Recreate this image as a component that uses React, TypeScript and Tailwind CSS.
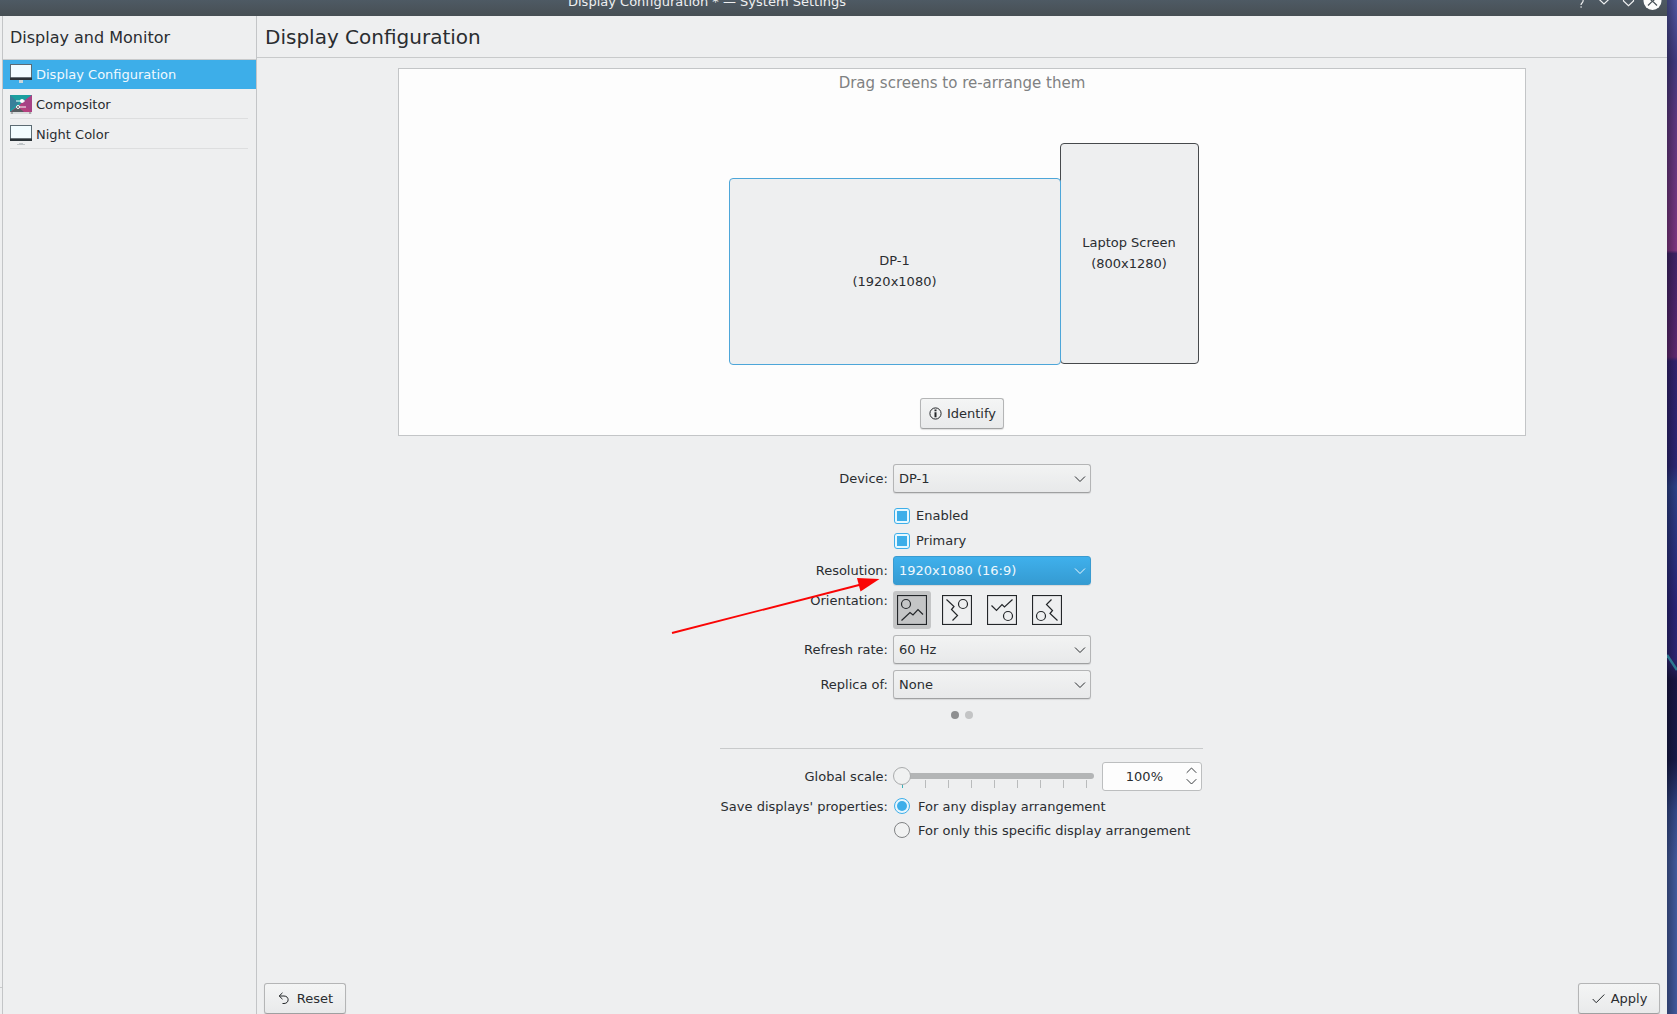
import type { ReactNode } from 'react';

const button =
  'flex items-center justify-center rounded-[3px] border border-[#b4b5b6] border-b-[#9fa0a1] bg-linear-to-b from-[#f4f5f5] to-[#e9eaeb] shadow-[0_1px_1px_rgba(0,0,0,0.12)]';

function Row({ label, className, children }: { label?: string; className: string; children: ReactNode }) {
  return (
    <div className={`flex gap-[5px] ${className}`}>
      <div className="w-[168px] shrink-0 text-right whitespace-nowrap">{label}</div>
      {children}
    </div>
  );
}

function Combo({ value, active }: { value: string; active?: boolean }) {
  return (
    <div
      className={`flex h-[29px] w-[198px] items-center justify-between rounded-[3px] border pr-[4px] pl-[5px] shadow-[0_1px_1px_rgba(0,0,0,0.1)] ${
        active
          ? 'border-[#3a9bd0] bg-linear-to-b from-[#3fb0ec] to-[#359bd2] text-[#eff8fd]'
          : 'border-[#b4b5b6] border-b-[#9fa0a1] bg-linear-to-b from-[#f2f3f3] to-[#e8e9ea]'
      }`}
    >
      <span>{value}</span>
      <svg width="12" height="8" viewBox="0 0 12 8" fill="none" stroke="currentColor" strokeWidth="1">
        <path d="M1 1.5 L6 6.5 L11 1.5" />
      </svg>
    </div>
  );
}

function Check({ label }: { label: string }) {
  return (
    <div className="flex items-center gap-[6px] pl-px">
      <span className="flex size-[16px] items-center justify-center rounded-[3px] border border-[#3daee9] bg-[#e6f8ff]">
        <span className="size-[10px] bg-[#3daee9]" />
      </span>
      {label}
    </div>
  );
}

function Radio({ label, on }: { label: string; on?: boolean }) {
  return (
    <div className="flex items-center gap-[8px] pl-px">
      <span
        className={`flex size-[16px] items-center justify-center rounded-full border ${
          on ? 'border-[#3daee9] bg-[#e8f6fd]' : 'border-[#808284] bg-[#f1f2f2]'
        }`}
      >
        {on && <span className="size-[10px] rounded-full bg-[#3daee9]" />}
      </span>
      {label}
    </div>
  );
}

const orientations = [
  { cx: 9, cy: 9, line: 'M4.5 25.5 L13 17.5 L16 20 L21 14.5 L26 19.5' },
  { cx: 21, cy: 9, line: 'M4.5 4.5 L12 11.5 L9.5 14.5 L15.5 20.5 L10.5 25.5' },
  { cx: 21, cy: 21, line: 'M4.5 10.5 L9.5 15.5 L15 9.5 L17.5 12 L25.5 4.5' },
  { cx: 9, cy: 21, line: 'M19.5 4.5 L14.5 9.5 L20.5 15.5 L18 18.5 L25.5 25.5' },
];

function Monitor({ light }: { light?: boolean }) {
  return (
    <svg width="22" height="20" viewBox="0 0 22 20">
      <rect x="0" y="0" width="22" height="16" fill="#5c6b73" />
      <rect x="1" y="1" width="20" height="12.5" fill="#f2fcff" />
      <rect x="0" y="13.5" width="22" height="2.5" fill="#2b3338" />
      {light ? (
        <path d="M9 18 H13 V19 H15 V20 H7 V19 H9 Z" fill="#bfc4c7" />
      ) : (
        <path d="M9 16 H13 V19 H9 Z" fill="#c9d6dc" />
      )}
    </svg>
  );
}

function CompositorIcon() {
  return (
    <svg width="22" height="20" viewBox="0 0 22 20">
      <rect width="22" height="17" fill="#b5417f" />
      <path d="M0 0 H22 L0 17 Z" fill="#1a9f9f" />
      <path d="M0 0 L9 8 L0 15 Z" fill="#39809a" />
      <path d="M22 0 V17 L11 8 Z" fill="#a74285" />
      <path d="M0 17 L8 12 L14 17 Z" fill="#565d60" />
      <path d="M6 6 H15 M8 12 H16" stroke="#f5ffff" strokeWidth="1.2" />
      <circle cx="12" cy="6" r="2" fill="#fff" />
      <circle cx="8" cy="12" r="1.5" fill="#565d60" stroke="#fff" />
      <rect y="17" width="22" height="2" fill="#d9dcdd" />
      <path d="M1 18 H3 M19 18 H21" stroke="#777" />
    </svg>
  );
}

export default function App() {
  return (
    <div className="relative flex h-[1014px] w-[1677px] overflow-hidden bg-[#eeeff0] font-['DejaVu_Sans',sans-serif] text-[13px] leading-[21px] text-[#2a2d30]">
      <div className="flex w-[1667px] shrink-0 flex-col">
        <header className="flex h-4 shrink-0 items-end overflow-hidden bg-linear-to-b from-[#4e5a64] to-[#474f54] text-[#eff0f1]">
          <div className="mb-[4px] ml-[568px] whitespace-nowrap">Display Configuration * — System Settings</div>
          <svg className="ml-auto shrink-0" width="92" height="16" viewBox="0 0 92 16" fill="none" stroke="#eff0f1" strokeWidth="1.2">
            <path d="M8 0 Q8.5 1.5 7 3 Q6 4 6 5 M5.3 7 H7" />
            <path d="M24 -0.8 L29 4 L34 -0.8" />
            <path d="M48.5 -1 V1 L53.5 5.6 L58.5 1 V-1" />
            <circle cx="77.5" cy="1" r="9" fill="#fcfcfc" stroke="none" />
            <path d="M73 5.5 L77.5 1 L82 5.5 M75 -1 L77.5 1.5 L80 -1" stroke="#475057" />
          </svg>
        </header>

        <div className="flex min-h-0 flex-1">
          <div className="flex w-[3px] shrink-0 flex-col border-r border-[#c3c5c7]">
            <div className="mt-[971px] h-px bg-[#c8cacb]" />
          </div>
          <aside className="w-[254px] shrink-0 border-r border-[#c3c5c7]">
            <div className="flex h-[44px] items-center border-b border-[#c8cacb] pl-[7px] text-[16px]">
              Display and Monitor
            </div>
            <div className="flex h-[29px] items-center gap-[4px] bg-[#3daee9] pl-[7px] text-[#f0f9fe]">
              <div className="-mt-[2px]"><Monitor /></div>
              Display Configuration
            </div>
            <div className="mr-2 ml-[7px] flex h-[30px] items-center gap-[4px] border-b border-[#dddedf] pt-[2px]">
              <CompositorIcon />
              Compositor
            </div>
            <div className="mr-2 ml-[7px] flex h-[30px] items-center gap-[4px] border-b border-[#dddedf] pt-[2px]">
              <Monitor light />
              Night Color
            </div>
          </aside>

          <main className="flex flex-1 flex-col">
            <h1 className="flex h-[42px] shrink-0 items-center border-b border-[#c8cacb] pt-px pl-[8px] text-[20px]">
              Display Configuration
            </h1>

            <section className="relative mt-[10px] h-[368px] w-[1128px] shrink-0 self-center border border-[#c3c5c7] bg-[#fdfdfd]">
              <div className="mt-[4px] text-center text-[15px] text-[#7f8182]">Drag screens to re-arrange them</div>
              <div className="absolute top-[74px] left-[661px] flex h-[221px] w-[139px] flex-col items-center justify-center rounded-[4px] border border-[#46494c] bg-[#eeeff0] pr-px pb-[2px]">
                <span>Laptop Screen</span>
                <span>(800x1280)</span>
              </div>
              <div className="absolute top-[109px] left-[330px] flex h-[187px] w-[332px] flex-col items-center justify-center rounded-[4px] border border-[#4da6d9] bg-[#eeeff0] pr-px pb-[2px]">
                <span>DP-1</span>
                <span>(1920x1080)</span>
              </div>
              <div className={`${button} absolute top-[329px] left-[521px] h-[31px] w-[84px] gap-[5px] pl-px`}>
                <svg width="13" height="13" viewBox="0 0 13 13" fill="none" stroke="#232629">
                  <circle cx="6.5" cy="6.5" r="5.6" strokeWidth="1" />
                  <path d="M6.5 2.5 V4.3 M6.5 5.3 V10.3" strokeWidth="2" />
                </svg>
                Identify
              </div>
            </section>

            <section className="mt-[28px] flex w-[484px] flex-col self-center">
              <Row label="Device:" className="h-[29px] items-center"><Combo value="DP-1" /></Row>
              <Row className="mt-[10px] h-[25px] items-center"><Check label="Enabled" /></Row>
              <Row className="h-[25px] items-center"><Check label="Primary" /></Row>
              <Row label="Resolution:" className="mt-[3px] h-[29px] items-center"><Combo value="1920x1080 (16:9)" active /></Row>
              <Row label="Orientation:" className="mt-[5px] h-[39px] items-start">
                <div className="flex gap-[7px] pt-px">
                  {orientations.map((o, i) => (
                    <div key={i} className={`flex size-[38px] items-center justify-center rounded-[3px] ${i === 0 ? 'bg-[#c4c5c6]' : ''}`}>
                      <svg width="30" height="30" viewBox="0 0 30 30" fill="none" stroke="#232629" strokeWidth="1.2">
                        <rect x="0.5" y="0.5" width="29" height="29" />
                        <circle cx={o.cx} cy={o.cy} r="4.5" />
                        <path d={o.line} />
                      </svg>
                    </div>
                  ))}
                </div>
              </Row>
              <Row label="Refresh rate:" className="mt-[6px] h-[29px] items-center"><Combo value="60 Hz" /></Row>
              <Row label="Replica of:" className="mt-[6px] h-[29px] items-center"><Combo value="None" /></Row>
              <div className="mt-[12px] flex justify-center gap-[6px]">
                <span className="size-[8px] rounded-full bg-[#8e8f90]" />
                <span className="size-[8px] rounded-full bg-[#c3c4c5]" />
              </div>
              <div className="mt-[29px] mr-px h-px bg-[#c8cacb]" />
              <Row label="Global scale:" className="mt-[13px] h-[29px] items-center">
                <svg className="shrink-0" width="204" height="29" viewBox="0 0 204 29">
                  <rect x="4" y="11" width="197" height="6" rx="3" fill="#b3b5b6" />
                  {[1, 2, 3, 4, 5, 6, 7, 8].map((i) => (
                    <rect key={i} x={9 + i * 23} y="18" width="1" height="8" fill="#b9bbbc" />
                  ))}
                  <rect x="9" y="20" width="1" height="6" fill="#3bb0b8" />
                  <circle cx="9" cy="14" r="8.5" fill="#f0f1f1" stroke="#a9abac" />
                </svg>
                <div className="flex h-[29px] w-[100px] items-center justify-end rounded-[3px] border border-[#bcbebf] bg-[#fdfdfd] pr-[4px]">
                  <span className="mr-[23px]">100%</span>
                  <svg className="-mt-px" width="11" height="18" viewBox="0 0 11 18" fill="none" stroke="#3b3e41" strokeWidth="1">
                    <path d="M0.7 5.8 L5.5 1 L10.3 5.8 M0.7 12.2 L5.5 17 L10.3 12.2" />
                  </svg>
                </div>
              </Row>
              <Row label="Save displays' properties:" className="mt-[3px] h-[24px] items-center whitespace-nowrap">
                <Radio label="For any display arrangement" on />
              </Row>
              <Row className="h-[24px] items-center whitespace-nowrap">
                <Radio label="For only this specific display arrangement" />
              </Row>
            </section>

            <footer className="mt-auto flex justify-between px-[7px]">
              <div className={`${button} h-[31px] w-[82px] gap-[7px] pl-px`}>
                <svg width="12" height="13" viewBox="0 0 12 13" fill="none" stroke="#232629" strokeWidth="1">
                  <path d="M4.5 0.8 L1.2 4 L4.5 7.2 M1.2 4 H6 C11.5 4 11.5 11.5 6 11.5 H4.5" />
                </svg>
                Reset
              </div>
              <div className={`${button} h-[31px] w-[82px] gap-[6px] pl-px`}>
                <svg width="13" height="12" viewBox="0 0 13 12" fill="none" stroke="#232629" strokeWidth="1">
                  <path d="M0.7 6 L4.2 9.7 L12.3 1.5" />
                </svg>
                Apply
              </div>
            </footer>
          </main>
        </div>
      </div>

      <svg className="shrink-0" width="10" height="1014" viewBox="0 0 10 1014">
        <defs>
          <linearGradient id="sky" x1="0" y1="0" x2="0" y2="1014" gradientUnits="userSpaceOnUse">
            <stop offset="0" stopColor="#5156a0" />
            <stop offset="0.06" stopColor="#413a80" />
            <stop offset="0.12" stopColor="#5f3880" />
            <stop offset="0.247" stopColor="#7d3580" />
            <stop offset="0.25" stopColor="#3f2468" />
            <stop offset="0.352" stopColor="#5f2870" />
            <stop offset="0.356" stopColor="#33226f" />
            <stop offset="0.46" stopColor="#2c2673" />
            <stop offset="0.48" stopColor="#2d4188" />
            <stop offset="0.6" stopColor="#2a2478" />
            <stop offset="0.65" stopColor="#2e2672" />
            <stop offset="0.67" stopColor="#1a1644" />
            <stop offset="0.75" stopColor="#181b48" />
            <stop offset="0.8" stopColor="#344888" />
            <stop offset="0.85" stopColor="#435a9c" />
            <stop offset="1" stopColor="#43599c" />
          </linearGradient>
          <linearGradient id="edge">
            <stop offset="0" stopColor="#000" stopOpacity="0.3" />
            <stop offset="1" stopColor="#000" stopOpacity="0" />
          </linearGradient>
        </defs>
        <rect width="10" height="1014" fill="url(#sky)" />
        <rect width="10" height="1014" fill="url(#edge)" />
        <path d="M0 655 L10 670" stroke="#2f7891" strokeWidth="2.5" />
      </svg>

      <svg className="pointer-events-none absolute top-[570px] left-[665px]" width="225" height="70" viewBox="0 0 225 70">
        <path d="M7 63 L196 14.5" stroke="#fa0505" strokeWidth="1.9" />
        <path d="M214.5 9 L192 8 L195.5 21.5 Z" fill="#fa0505" />
      </svg>
    </div>
  );
}
